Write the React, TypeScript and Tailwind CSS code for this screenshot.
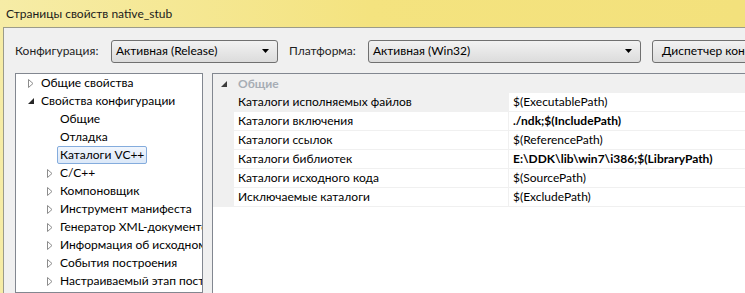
import React from "react";

const font = { fontFamily: 'Lato, "Noto Sans", sans-serif' };

function Collapsed() {
  return (
    <svg width="6" height="9" viewBox="0 0 6 9" className="shrink-0">
      <path d="M0.5 0.5 L5 4.5 L0.5 8.5 Z" fill="white" stroke="#8c8c8c" strokeWidth="1" />
    </svg>
  );
}

function Expanded({ color = "#262626" }: { color?: string }) {
  return (
    <svg width="6" height="6" viewBox="0 0 6 6" className="shrink-0">
      <path d="M6 0 L6 6 L0 6 Z" fill={color} />
    </svg>
  );
}

function Combo({ text, width }: { text: string; width: string }) {
  return (
    <div
      className={`${width} shrink-0 h-[23px] flex items-center justify-between rounded-[3px] border border-[#707070] bg-gradient-to-b from-[#f2f2f2] to-[#dcdcdc] pl-[4px] pr-[8px] text-[12px] text-black`}
    >
      <span>{text}</span>
      <svg width="7" height="4" viewBox="0 0 7 4">
        <path d="M0 0 L7 0 L3.5 4 Z" fill="#000" />
      </svg>
    </div>
  );
}

type TreeItem = { label: string; level: number; kind: "collapsed" | "expanded" | "leaf"; selected?: boolean };

const tree: TreeItem[] = [
  { label: "Общие свойства", level: 0, kind: "collapsed" },
  { label: "Свойства конфигурации", level: 0, kind: "expanded" },
  { label: "Общие", level: 1, kind: "leaf" },
  { label: "Отладка", level: 1, kind: "leaf" },
  { label: "Каталоги VC++", level: 1, kind: "leaf", selected: true },
  { label: "C/C++", level: 1, kind: "collapsed" },
  { label: "Компоновщик", level: 1, kind: "collapsed" },
  { label: "Инструмент манифеста", level: 1, kind: "collapsed" },
  { label: "Генератор XML-документов", level: 1, kind: "collapsed" },
  { label: "Информация об исходном коде", level: 1, kind: "collapsed" },
  { label: "События построения", level: 1, kind: "collapsed" },
  { label: "Настраиваемый этап построения", level: 1, kind: "collapsed" },
];

const rows: { name: string; value: string; bold?: boolean; first?: boolean }[] = [
  { name: "Каталоги исполняемых файлов", value: "$(ExecutablePath)", first: true },
  { name: "Каталоги включения", value: "./ndk;$(IncludePath)", bold: true },
  { name: "Каталоги ссылок", value: "$(ReferencePath)" },
  { name: "Каталоги библиотек", value: "E:\\DDK\\lib\\win7\\i386;$(LibraryPath)", bold: true },
  { name: "Каталоги исходного кода", value: "$(SourcePath)" },
  { name: "Исключаемые каталоги", value: "$(ExcludePath)" },
];

export default function App() {
  return (
    <div
      className="w-[745px] h-[293px] overflow-hidden flex flex-col bg-gradient-to-r from-[#f6eca6] via-[#f4e37f] to-[#f3e17c]"
      style={font}
    >
      <div className="h-[27px] shrink-0 flex items-center pl-[6px] text-[12px] text-[#1a1a1a]">
        Страницы свойств native_stub
      </div>

      <div className="flex-1 ml-[3px] flex flex-col border-l border-t border-[#9b9b8a] bg-[#f0f0f0] text-[12px] text-black">
        <div className="h-[45px] shrink-0 flex items-center pl-[11px] pt-[1px]">
          <span className="w-[96px] shrink-0 text-[#1e1e1e]">Конфигурация:</span>
          <Combo text="Активная (Release)" width="w-[167px]" />
          <span className="ml-[11px] w-[79px] shrink-0 text-[#1e1e1e]">Платформа:</span>
          <Combo text="Активная (Win32)" width="w-[273px]" />
          <div className="ml-[11px] h-[23px] w-[110px] shrink-0 flex items-center rounded-[3px] border border-[#707070] bg-gradient-to-b from-[#f2f2f2] to-[#dcdcdc] pl-[9px] whitespace-nowrap overflow-hidden">
            Диспетчер конфигураций...
          </div>
        </div>

        <div className="flex-1 flex pl-[11px] min-h-0">
          <div className="w-[188px] shrink-0 border border-[#828790] bg-white overflow-hidden">
            {tree.map((t) => (
              <div
                key={t.label}
                className={`h-[18px] flex items-center whitespace-nowrap ${t.level === 0 ? "pl-[12px]" : "pl-[31px]"}`}
              >
                <div className="w-[13px] shrink-0 flex items-center">
                  {t.kind === "collapsed" && <Collapsed />}
                  {t.kind === "expanded" && <Expanded />}
                </div>
                <span
                  className={
                    t.selected
                      ? "-ml-[3px] px-[2px] h-[18px] flex items-center rounded-[2px] border border-[#84acdd] bg-gradient-to-b from-[#f1f6fd] to-[#dbe8f8]"
                      : ""
                  }
                >
                  {t.label}
                </span>
              </div>
            ))}
          </div>

          <div className="flex-1 ml-[9px] border-l border-t border-[#828790] bg-white flex flex-col">
            <div className="h-[19px] flex items-center bg-[#f0f0f0] pl-[8px]">
              <Expanded color="#3c3c3c" />
              <span className="ml-[11px] font-bold text-[#a7adb5]">Общие</span>
            </div>
            {rows.map((r) => (
              <div key={r.name} className="h-[19px] flex bg-[#f0f0f0]">
                <div className="w-[21px] shrink-0" />
                <div
                  className={`w-[274px] shrink-0 flex items-center pl-[4px] border-b border-[#f0f0f0] ${r.first ? "bg-[#f0f0f0]" : "bg-white"}`}
                >
                  {r.name}
                </div>
                <div className="w-px bg-[#f0f0f0]" />
                <div className={`flex-1 flex items-center pl-[4px] bg-white border-b border-[#f0f0f0] ${r.bold ? "font-bold" : ""}`}>
                  {r.value}
                </div>
              </div>
            ))}
          </div>
        </div>
      </div>
    </div>
  );
}
